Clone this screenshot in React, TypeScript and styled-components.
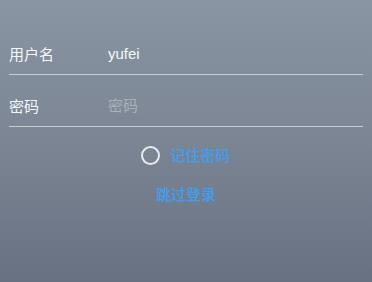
import styled, { createGlobalStyle } from "styled-components";

const GlobalStyle = createGlobalStyle`
  html, body {
    margin: 0;
    padding: 0;
  }
  body {
    font-family: "Liberation Sans", "Noto Sans CJK SC", sans-serif;
  }
`;

const App = () => {
  return (
    <>
      <GlobalStyle />
      <Page>
        <Form>
          <FieldRow $first>
            <Label>用户名</Label>
            <Input defaultValue="yufei" />
          </FieldRow>
          <FieldRow>
            <Label>密码</Label>
            <Input type="text" placeholder="密码" />
          </FieldRow>
        </Form>
        <RememberRow>
          <Circle />
          <BlueText>记住密码</BlueText>
        </RememberRow>
        <SkipRow>
          <BlueText>跳过登录</BlueText>
        </SkipRow>
      </Page>
    </>
  );
};

export default App;

const Page = styled.div`
  background: linear-gradient(180deg, #8a95a3 0%, #7b8594 50%, #687181 100%);
  box-sizing: border-box;
  height: 282px;
  overflow: hidden;
  width: 372px;
`;

const Form = styled.div`
  display: flex;
  flex-direction: column;
  padding: 0 9px;
`;

const FieldRow = styled.div<{ $first?: boolean }>`
  align-items: center;
  border-bottom: 1px solid #c6ccd4;
  display: flex;
  height: 41px;
  margin-top: ${({ $first }) => ($first ? "33px" : "10px")};
`;

const Label = styled.span`
  color: #f5f7f9;
  font-size: 15px;
  width: 99px;
`;

const Input = styled.input`
  background: transparent;
  border: none;
  color: #f5f7f9;
  flex: 1;
  font-family: "Liberation Sans", "Noto Sans CJK SC", sans-serif;
  font-size: 15px;
  outline: none;
  padding: 0;

  &::placeholder {
    color: #a9b1bb;
  }
`;

const RememberRow = styled.div`
  align-items: center;
  display: flex;
  gap: 10px;
  height: 20px;
  justify-content: center;
  margin-top: 18px;
`;

const Circle = styled.span`
  border: 2px solid #e9ecef;
  border-radius: 50%;
  box-sizing: border-box;
  height: 19px;
  width: 19px;
`;

const BlueText = styled.span`
  color: #3f9ef4;
  font-family: "Noto Sans CJK SC", sans-serif;
  font-size: 15px;
  font-weight: 500;
  line-height: 20px;
`;

const SkipRow = styled.div`
  display: flex;
  justify-content: center;
  margin-top: 19px;
`;
